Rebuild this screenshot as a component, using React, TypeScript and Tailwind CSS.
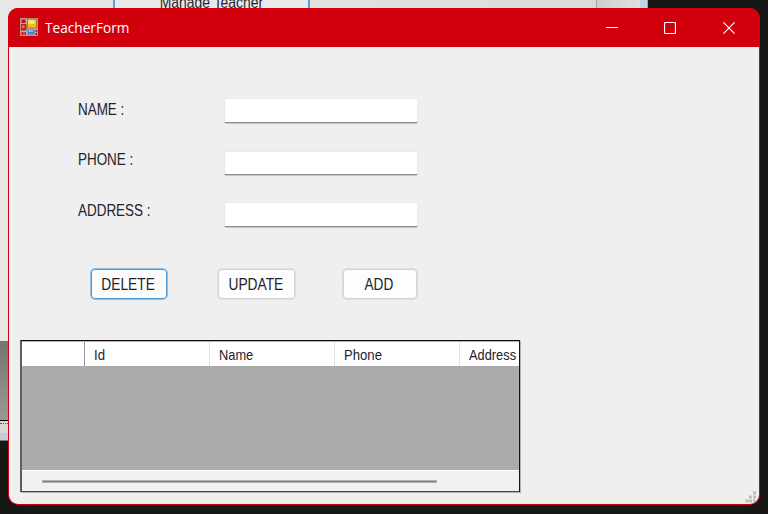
import React from "react";

const font = "font-['Liberation_Sans',Arial,sans-serif]";

function Label({ text, scale }: { text: string; scale: string }) {
  return (
    <span className={`inline-block whitespace-nowrap text-[16px] leading-5 text-[#23222c] ${scale}`}>{text}</span>
  );
}

function Field({ label, scale, row, offset, input }: { label: string; scale: string; row: string; offset: string; input: string }) {
  return (
    <div className={`flex items-start ${row}`}>
      <div className={`w-[146px] shrink-0 ${offset}`}>
        <Label text={label} scale={scale} />
      </div>
      <input
        className={`block w-[194px] rounded-[2px] border border-[#e9e9e9] border-b-[#8d8d8d] bg-white shadow-[0_1px_0_#c6c6c6] outline-none ${input}`}
      />
    </div>
  );
}

function FormIcon() {
  return (
    <svg width="18" height="18" viewBox="0 0 18 18" className="-mt-px shrink-0">
      <rect x="0.5" y="0.5" width="17" height="17" fill="#c9a9a4" stroke="#bf8f8a" />
      <rect x="1.500" y="1.500" width="4" height="3.500" fill="#c80a12" />
      <rect x="1" y="6" width="5.500" height="6.500" fill="#a92b1f" />
      <rect x="2" y="7.500" width="2.500" height="2.500" fill="#e07a60" />
      <rect x="1.500" y="14" width="2" height="3" fill="#c80a12" />
      <rect x="4.500" y="14" width="1.500" height="3" fill="#c80a12" />
      <rect x="7.500" y="1" width="9" height="9" fill="#f0bd1c" stroke="#8f7426" strokeWidth="0.8" />
      <rect x="8.500" y="2" width="6" height="4" fill="#fbe17c" />
      <rect x="7.500" y="11.500" width="7" height="5" fill="#3f84e4" />
      <rect x="8.500" y="12" width="4.500" height="2" fill="#86b8f8" />
      <rect x="15.500" y="12" width="1.500" height="2" fill="#c80a12" />
      <rect x="15.500" y="15" width="1.500" height="2" fill="#c80a12" />
    </svg>
  );
}

function TitleBar() {
  return (
    <div className="flex h-[39px] shrink-0 items-center bg-[#d2000c] pl-3 text-white">
      <FormIcon />
      <span className="-mt-[2px] ml-[7px] inline-block origin-left scale-x-[0.91] whitespace-nowrap font-['Open_Sans','Noto_Sans',sans-serif] text-[15px] leading-5">
        TeacherForm
      </span>
      <div className="ml-auto flex items-center pr-[25px]">
        <svg className="mr-[46px]" width="12" height="12" viewBox="0 0 12 12" shapeRendering="crispEdges">
          <path d="M0 5.500H12" stroke="#fff" />
        </svg>
        <svg className="mr-[47px]" width="12" height="12" viewBox="0 0 12 12" fill="none">
          <rect x="0.5" y="0.5" width="11" height="11" rx="1" stroke="#fff" strokeWidth="1.2" />
        </svg>
        <svg width="12" height="12" viewBox="0 0 12 12" fill="none">
          <path d="M0.400 0.400L11.600 11.600M11.600 0.400L0.400 11.600" stroke="#fff" strokeWidth="1.200" />
        </svg>
      </div>
    </div>
  );
}

function Desktop() {
  return (
    <div className="flex h-[514px] flex-col bg-[#171717]">
      <div className="flex h-[341px] w-[648px] bg-[linear-gradient(90deg,#e7e7e7,#dadada)]">
        <div className="w-[113px]" />
        <div className={`h-2 w-[197px] border-x-2 border-[#5a9fd4] bg-[#e9e9e9] text-center ${font}`}>
          <div className="-mt-[7px] text-[16px] leading-5 text-[#26262c]">
            <span className="inline-block scale-x-[0.87] whitespace-nowrap">Manage Teacher</span>
          </div>
        </div>
        <div className="ml-[286px] h-2 w-[44px] border-l border-[#a2a2a2] bg-[linear-gradient(90deg,#cfcfcf,#e1e1e1)]" />
        <div className="h-2 w-2 border-r border-[#9aa4ae] bg-[#c5d1df]" />
      </div>
      <div className="h-[79px] w-2 bg-[linear-gradient(180deg,#747474,#999)]" />
      <div className="h-[13px] w-2 border-t border-black bg-[#d8d8d8] pt-[2px]">
        <div className="border-t border-dotted border-[#555]" />
      </div>
      <div className="h-2 w-2 border-b border-[#777] bg-[#c0ccda]" />
    </div>
  );
}

function Column({ text, scale, width }: { text: string; scale: string; width: string }) {
  return (
    <div className={`flex h-6 shrink-0 items-center border-r border-[#e2e2e2] pt-[2px] pl-[9px] ${width}`}>
      <span className={`inline-block origin-left whitespace-nowrap text-[15px] leading-5 text-[#23222c] ${scale}`}>{text}</span>
    </div>
  );
}

function Grid() {
  return (
    <div className="mt-[40px] ml-[11px] flex h-[152px] w-[500px] flex-col border border-l-2 border-[#5c5f61] border-t-[#0c0c0c] border-r-[#151515] border-b-[#454545] bg-[#ababab] shadow-[1px_1px_0_#b0b0b0]">
      <div className="flex h-[25px] shrink-0 overflow-hidden border-t border-[#b5b5b5] bg-white">
        <div className="w-[63px] shrink-0 border-r border-[#999]" />
        <Column text="Id" scale="scale-x-[0.88]" width="w-[125px]" />
        <Column text="Name" scale="scale-x-[0.855]" width="w-[125px]" />
        <Column text="Phone" scale="scale-x-[0.875]" width="w-[125px]" />
        <Column text="Address" scale="scale-x-[0.855]" width="w-[125px]" />
      </div>
      <div className="mt-auto flex h-[21px] items-center border-t border-white bg-[#f0f0f0] pl-[20px]">
        <div className="h-[3px] w-[395px] rounded-full border-y border-[#b0b0b0] bg-[#808080]" />
      </div>
    </div>
  );
}

export default function App() {
  return (
    <div className="relative h-[514px] w-[768px] overflow-hidden">
      <Desktop />
      <div className={`absolute top-2 left-2 flex h-[497px] w-[752px] flex-col overflow-hidden rounded-[10px] bg-[#d2000c] ${font}`}>
        <TitleBar />
        <div className="relative mx-px mb-px grow overflow-hidden rounded-b-[9px] bg-[#efefef]">
          <div className="flex flex-col pt-[51px] pl-[68.500px]">
            <Field label="NAME :" scale="origin-left scale-x-[0.84]" row="h-[52px]" offset="mt-0" input="h-[25px]" />
            <Field label="PHONE :" scale="origin-left scale-x-[0.84]" row="h-[52px]" offset="-mt-[2px]" input="mt-px h-[24px]" />
            <Field label="ADDRESS :" scale="origin-left scale-x-[0.84]" row="h-[26px]" offset="-mt-[3px]" input="h-[25px]" />
          </div>
          <div className="mt-[40px] ml-[81px] flex">
            <button className="flex h-[32px] w-[78px] items-center justify-center rounded-[5px] border border-[#8fc1e8] bg-[#fdfdfd] pt-[2px] pr-[2px] shadow-[inset_0_0_0_1px_#4b9cdc]">
              <Label text="DELETE" scale="scale-x-[0.86]" />
            </button>
            <button className="ml-[49px] flex h-[32px] w-[79px] items-center justify-center rounded-[5px] border border-[#dedede] bg-[#fdfdfd] pt-[2px] pr-[2px] shadow-[inset_0_0_0_1px_#d4d4d4]">
              <Label text="UPDATE" scale="scale-x-[0.86]" />
            </button>
            <button className="ml-[46px] flex h-[32px] w-[76px] items-center justify-center rounded-[5px] border border-[#dedede] bg-[#fdfdfd] pt-[2px] pr-[2px] shadow-[inset_0_0_0_1px_#d4d4d4]">
              <Label text="ADD" scale="scale-x-[0.85]" />
            </button>
          </div>
          <Grid />
          <svg className="absolute right-[2px] bottom-[1px]" width="12" height="12" viewBox="0 0 12 12" fill="#bdbdbd">
            <rect x="8" y="0.5" width="3" height="3" />
            <rect x="4" y="4.500" width="3" height="3" />
            <rect x="8" y="4.500" width="3" height="3" />
            <rect x="0.5" y="8.500" width="3" height="3" />
            <rect x="4" y="8.500" width="3" height="3" />
            <rect x="8" y="8.500" width="3" height="3" />
          </svg>
        </div>
      </div>
    </div>
  );
}
